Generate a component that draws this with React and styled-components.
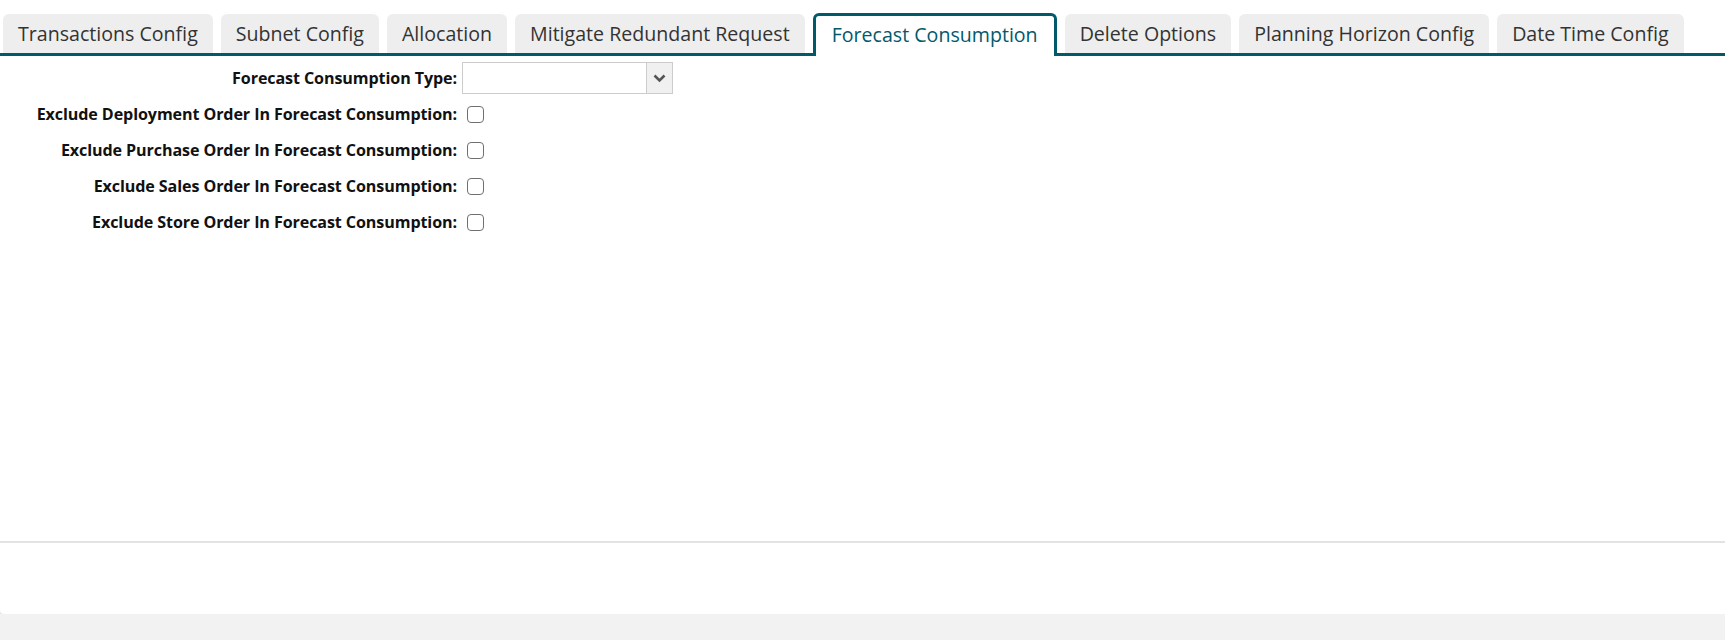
import React, { useState } from "react"
import styled, { createGlobalStyle } from "styled-components"

const GlobalStyle = createGlobalStyle`
  html, body {
    margin: 0;
    padding: 0;
    background-color: #f2f2f2;
    font-family: "Open Sans", "Liberation Sans", sans-serif;
  }
`

const tabs = [
  "Transactions Config",
  "Subnet Config",
  "Allocation",
  "Mitigate Redundant Request",
  "Forecast Consumption",
  "Delete Options",
  "Planning Horizon Config",
  "Date Time Config",
]

const fields = [
  "Exclude Deployment Order In Forecast Consumption:",
  "Exclude Purchase Order In Forecast Consumption:",
  "Exclude Sales Order In Forecast Consumption:",
  "Exclude Store Order In Forecast Consumption:",
]

const App = () => {
  const [active, setActive] = useState(4)
  const [checked, setChecked] = useState({})

  return (
    <>
      <GlobalStyle />
      <Card>
        <TabBar>
          {tabs.map((t, i) => (
            <Tab key={t} $active={i === active} onClick={() => setActive(i)}>
              {t}
            </Tab>
          ))}
        </TabBar>

        <Content>
          <FormGrid>
            <Label>Forecast Consumption Type:</Label>
            <SelectBox>
              <SelectValue />
              <SelectButton>
                <svg width="13" height="9" viewBox="0 0 13 9">
                  <path d="M1.5 1.5 L6.5 6.5 L11.5 1.5" fill="none" stroke="#555" strokeWidth="2.6" />
                </svg>
              </SelectButton>
            </SelectBox>

            {fields.map((f, i) => (
              <React.Fragment key={f}>
                <Label>{f}</Label>
                <CheckCell>
                  <Check
                    type="checkbox"
                    checked={!!checked[i]}
                    onChange={() => setChecked({ ...checked, [i]: !checked[i] })}
                  />
                </CheckCell>
              </React.Fragment>
            ))}
          </FormGrid>
        </Content>

        <Footer />
      </Card>
    </>
  )
}

const Card = styled.div`
  background-color: #ffffff;
  height: 614px;
  display: flex;
  flex-direction: column;
  border-bottom-left-radius: 4px;
  box-shadow: 0 3px 8px rgba(0, 0, 0, 0.12);
`

const TabBar = styled.div`
  display: flex;
  align-items: flex-end;
  gap: 8px;
  padding: 13px 0 0 3px;
  border-bottom: 3px solid #02596b;
  height: 40px;
`

const Tab = styled.div`
  box-sizing: border-box;
  height: ${p => (p.$active ? "43px" : "39px")};
  margin-bottom: ${p => (p.$active ? "-3px" : "0")};
  padding: ${p => (p.$active ? "0 16px 3px" : "0 15px")};
  display: flex;
  align-items: center;
  font-size: 19.6px;
  color: ${p => (p.$active ? "#02596b" : "#333333")};
  background-color: ${p => (p.$active ? "#ffffff" : "#eeeeee")};
  border: ${p => (p.$active ? "3px solid #02596b" : "none")};
  border-bottom: none;
  border-radius: 6px 6px 0 0;
  white-space: nowrap;
  cursor: pointer;
`

const Content = styled.div`
  flex: 1;
  padding-top: 4px;
`

const FormGrid = styled.div`
  display: grid;
  grid-template-columns: 457px auto;
  grid-auto-rows: 36px;
  column-gap: 5px;
  align-items: center;
  justify-content: start;
`

const Label = styled.div`
  text-align: right;
  font-weight: 700;
  font-size: 16.1px;
  color: #111111;
  white-space: nowrap;
  letter-spacing: -0.1px;
`

const SelectBox = styled.div`
  box-sizing: border-box;
  display: flex;
  width: 211px;
  height: 32px;
  border: 1px solid #cccccc;
  background-color: #ffffff;
`

const SelectValue = styled.div`
  flex: 1;
`

const SelectButton = styled.div`
  width: 25px;
  display: flex;
  align-items: center;
  justify-content: center;
  background-color: #f0f0f0;
  border-left: 1px solid #cccccc;
`

const CheckCell = styled.div`
  display: flex;
  align-items: center;
  padding-left: 5px;
`

const Check = styled.input`
  appearance: none;
  margin: 0;
  width: 17px;
  height: 17px;
  border: 1.5px solid #707070;
  border-radius: 4px;
  background-color: #ffffff;
  cursor: pointer;

  &:checked {
    background-color: #02596b;
    border-color: #02596b;
  }
`

const Footer = styled.div`
  height: 71px;
  border-top: 2px solid #e3e3e3;
`

export default App
